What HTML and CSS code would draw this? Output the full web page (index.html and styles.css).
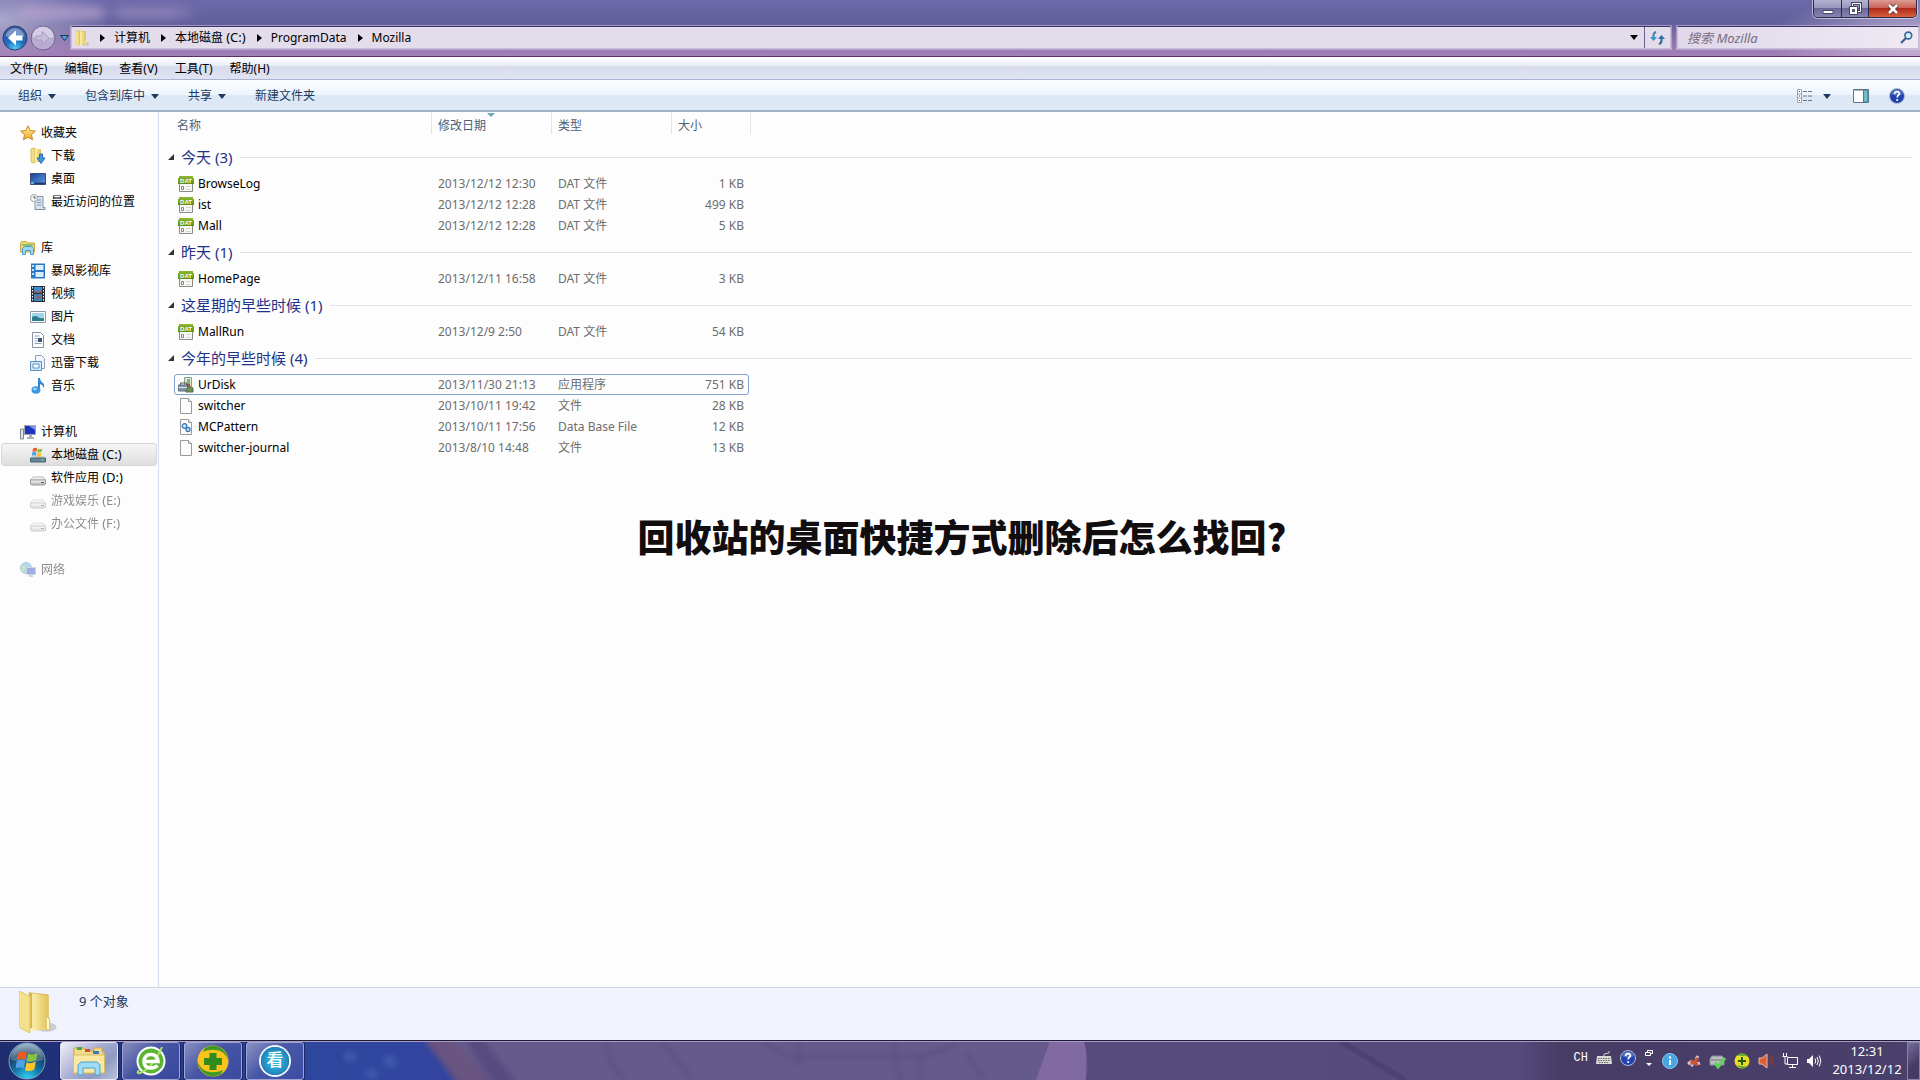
FILE: index.html
```html
<!DOCTYPE html>
<html lang="zh-CN">
<head>
<meta charset="utf-8">
<title>Mozilla</title>
<link rel="stylesheet" href="styles.css">
</head>
<body>
<svg class="defs" aria-hidden="true">
  <defs>
    <linearGradient id="g-folder" x1="0" x2="1"><stop offset="0" stop-color="#fbf0ad"/><stop offset="1" stop-color="#e2c254"/></linearGradient>
    <linearGradient id="g-green" x1="0" x2="0" y1="0" y2="1"><stop offset="0" stop-color="#8fb832"/><stop offset="1" stop-color="#5f8f10"/></linearGradient>
    <linearGradient id="g-star" x1="0" x2="0" y1="0" y2="1"><stop offset="0" stop-color="#fff0a0"/><stop offset="1" stop-color="#f2a626"/></linearGradient>
    <linearGradient id="g-blue" x1="0" x2="1" y1="0" y2="1"><stop offset="0" stop-color="#1c3f96"/><stop offset="1" stop-color="#5b9be6"/></linearGradient>
    <linearGradient id="g-disk" x1="0" x2="0" y1="0" y2="1"><stop offset="0" stop-color="#fafafa"/><stop offset="1" stop-color="#b4b4b4"/></linearGradient>
    <radialGradient id="g-back" cx=".5" cy=".95" r=".9"><stop offset="0" stop-color="#4fd0f8"/><stop offset=".45" stop-color="#1f6cba"/><stop offset="1" stop-color="#3a5a9e"/></radialGradient>
    <radialGradient id="g-orb" cx=".5" cy="1" r="1"><stop offset="0" stop-color="#35d6f6"/><stop offset=".4" stop-color="#1275a6"/><stop offset=".7" stop-color="#1d4268"/><stop offset="1" stop-color="#8fb0c8"/></radialGradient>
    <symbol id="i-dat" viewBox="0 0 16 16">
      <path d="M1.500 6v9.500h13V6" fill="#f7f7f3" stroke="#8a8a88"/>
      <path d="M1 0h14v2h1v6H0V2h1z" fill="url(#g-green)"/>
      <text x="8" y="7" class="dat-label">DAT</text>
      <path d="M3.500 10.500h2v3h-2z" fill="none" stroke="#888"/><path d="M8 10h5v1H8zM8 13h5v1H8z" fill="#d4d8d0"/>
    </symbol>
    <symbol id="i-page" viewBox="0 0 16 16">
      <path d="M2.500.5h8l3 3v12h-11z" fill="#fcfcfc" stroke="#999"/><path d="M10.500.5v3h3" fill="#eee" stroke="#999"/>
    </symbol>
    <symbol id="i-disk" viewBox="0 0 16 16">
      <path d="M3 7h10l2.500 3H.5z" fill="#f2f2f2" stroke="#bbb"/><path d="M.5 10h15v4l-1 1h-13l-1-1z" fill="url(#g-disk)" stroke="#999"/><path d="M11 12h3v1h-3z" fill="#555"/>
    </symbol>
    <symbol id="i-flag" viewBox="0 0 16 16">
      <path d="M1.500 2.500Q4.500 0 7.500 2L6.500 7Q4 5 .5 7z" fill="#ee5b22"/><path d="M8.500 2.500Q11.500 4 15 2l-1 5q-4 2-6.500.5z" fill="#86c440"/><path d="M.5 8Q4 6 6.300 8l-1 5Q3 11-.5 13z" fill="#4da0ea"/><path d="M7.300 8.500Q10 10 13.800 8l-1 5.500q-3.500 2-6.500.500z" fill="#fbc62c"/>
    </symbol>
    <symbol id="i-help" viewBox="0 0 16 16">
      <circle cx="8" cy="8" r="7.500" fill="#2242b0" stroke="#b4bccb"/><path d="M2 6a6.300 6.300 0 0 1 12 0q-6 3-12 0" fill="#7795dd" opacity=".6"/><path d="M5.500 6Q6 3.500 8.200 3.700 10.700 4 10.300 6.200 8.200 7.500 8.200 9.500" fill="none" stroke="#fff" stroke-width="1.700"/><circle cx="8.200" cy="12" r="1.100" fill="#fff"/>
    </symbol>
    <symbol id="i-folder" viewBox="0 0 32 36">
      <ellipse cx="23" cy="31" rx="9" ry="4" fill="#888" opacity=".35"/>
      <path d="M8 1l17 2v29H8z" fill="#d8b64a"/><path d="M11 2l14 2v29l-14 1z" fill="url(#g-folder)"/><path d="M0 0l9 5v31L0 31z" fill="#f3e18c" stroke="#e4cb68"/><path d="M23 22q3 0 3 4v7h-3z" fill="#fff8cc" stroke="#dcc36b"/>
    </symbol>
  </defs>
</svg>

<div class="window">
  <header class="frame">
    <div class="titlebar">
      <span class="title-glow"></span>
      <div class="controls">
        <button class="ctl ctl-min" aria-label="最小化"><svg width="14" height="14" viewBox="0 0 14 14"><path d="M2 8.500h10v3H2z" fill="#fff" stroke="#4b4a66"/></svg></button>
        <button class="ctl ctl-max" aria-label="还原"><svg width="14" height="14" viewBox="0 0 14 14"><path d="M4.500 1.500h8v8h-8z" fill="none" stroke="#44435f" stroke-width="3"/><path d="M4.500 1.500h8v8h-8z" fill="none" stroke="#fff"/><path d="M1.500 4.500h8v8h-8z" fill="#fff" stroke="#44435f"/><path d="M4.500 7.500h2v2h-2z" fill="#77759b" stroke="#44435f"/></svg></button>
        <button class="ctl ctl-close" aria-label="关闭"><svg width="14" height="12" viewBox="0 0 14 12"><path d="M3 2l8 8M11 2l-8 8" stroke="#63302f" stroke-width="4.500"/><path d="M3 2l8 8M11 2l-8 8" stroke="#fff" stroke-width="2.600"/></svg></button>
      </div>
    </div>
    <div class="navrow">
      <button class="icon-btn" aria-label="后退"><svg width="26" height="26" viewBox="0 0 26 26"><circle cx="13" cy="13" r="12" fill="url(#g-back)" stroke="#2f3d6c"/><path d="M3.500 11a9.700 9.700 0 0 1 19 0q-9 4-19 0" fill="#fff" opacity=".35"/><path d="M14 5.500L6 13l8 7.500v-5h6.500v-5H14z" fill="#fff"/></svg></button>
      <button class="icon-btn" aria-label="前进"><svg width="26" height="26" viewBox="0 0 26 26"><circle cx="13" cy="13" r="12" fill="#b9acd0" stroke="#6d6492"/><path d="M2.500 12a10.500 10.500 0 0 1 21 0q-10 3-21 0" fill="#fff" opacity=".4"/><path d="M12 6.500l7 6.500-7 6.500v-4.500H6v-4h6z" fill="#c9bedb" stroke="#a99cc4"/></svg></button>
      <button class="icon-btn recent" aria-label="最近的页面"><svg width="9" height="6" viewBox="0 0 9 6"><path d="M.5.500h8l-4 5z" fill="#4aa0d8" stroke="#22335f"/></svg></button>
      <nav class="address" aria-label="地址">
        <svg width="14" height="16"><use href="#i-folder"/></svg>
        <i class="crumb-sep"></i><a href="#">计算机</a>
        <i class="crumb-sep"></i><a href="#">本地磁盘 <span class="latin">(C:)</span></a>
        <i class="crumb-sep"></i><a href="#">ProgramData</a>
        <i class="crumb-sep"></i><a href="#">Mozilla</a>
        <button class="icon-btn history" aria-label="以前的位置"><i class="caret"></i></button>
        <button class="icon-btn refresh" aria-label="刷新"><svg width="15" height="14" viewBox="0 0 15 14"><path d="M6 1Q3 2 3.500 6" fill="none" stroke="#3a7fb5" stroke-width="2"/><path d="M0 6h7l-3.500 4z" fill="#3a8fc8"/><path d="M9 13q3-1 2.500-5" fill="none" stroke="#2a6798" stroke-width="2"/><path d="M8 8h7l-3.500-4z" fill="#2e6fa6"/></svg></button>
      </nav>
      <div class="search">
        <input type="search" placeholder="搜索 Mozilla" aria-label="搜索">
        <svg width="13" height="13" viewBox="0 0 13 13"><path d="M1 12l5-5" stroke="#3c5c86" stroke-width="2.200"/><circle cx="8.300" cy="4.500" r="3.400" fill="#d8f0fa" stroke="#35679b" stroke-width="1.600"/></svg>
      </div>
    </div>
  </header>

  <nav class="menubar">
    <button>文件(F)</button><button>编辑(E)</button><button>查看(V)</button><button>工具(T)</button><button>帮助(H)</button>
  </nav>

  <div class="toolbar">
    <button>组织<i class="caret"></i></button>
    <button>包含到库中<i class="caret"></i></button>
    <button>共享<i class="caret"></i></button>
    <button>新建文件夹</button>
    <div class="tools">
      <button aria-label="更改视图"><svg width="16" height="14" viewBox="0 0 16 14"><path d="M.5.500h4v13h-4zM.5 5h4M.5 9h4" fill="#fff" stroke="#9aa4b4"/><path d="M2 2h1v1H2zM2 6.500h1v1H2zM2 11h1v1H2z" fill="#2b4a80"/><path d="M6 2.500h4M11 2.500h4M6 7h4M11 7h4M6 11.500h4M11 11.500h4" stroke="#6b7685"/></svg></button>
      <button class="view-caret" aria-label="更多选项"><i class="caret"></i></button>
      <button aria-label="预览窗格"><svg width="16" height="14" viewBox="0 0 16 14"><path d="M.5.500h15v13H.5z" fill="#fff" stroke="#5d7289"/><path d="M1 1.500h9" stroke="#a9b9c8"/><path d="M10.500 1h4.500v12h-4.500z" fill="#71bcc4" stroke="#457f8d"/></svg></button>
      <button class="help" aria-label="获取帮助"><svg width="16" height="16"><use href="#i-help"/></svg></button>
    </div>
  </div>

  <div class="body">
    <aside class="tree">
      <ul>
        <li class="root"><svg width="16" height="16" viewBox="0 0 16 16"><path d="M8 .8l2.200 4.700 5.200.6-3.900 3.500 1.100 5.200L8 12.200l-4.600 2.600 1.100-5.200L.6 6.100l5.200-.6z" fill="url(#g-star)" stroke="#c98a24"/></svg><a href="#">收藏夹</a></li>
        <li><svg width="16" height="16" viewBox="0 0 16 16"><path d="M1 1l4-1v15l-4-1z" fill="#f1dd8c" stroke="#d9bd5c"/><path d="M5 1h6v13H5z" fill="url(#g-folder)"/><path d="M9.500 6h3v4H15l-4 5.500L7 10h2.500z" fill="#3f9be0" stroke="#1f6cb4"/></svg><a href="#">下载</a></li>
        <li><svg width="16" height="16" viewBox="0 0 16 16"><path d="M.5 2.500h15v11H.5z" fill="url(#g-blue)" stroke="#3a4b7a"/><path d="M1 11.500h14V13H1z" fill="#233c70"/><path d="M1 11h3v2H1z" fill="#59b2e6"/></svg><a href="#">桌面</a></li>
        <li><svg width="16" height="16" viewBox="0 0 16 16"><path d="M5 2.500h8v11h2v2H5z" fill="#dbe3ea" stroke="#8592a0"/><path d="M7 6h4M7 8.500h4M7 11h4" stroke="#6f9acb"/><circle cx="4" cy="4" r="3.500" fill="#f2f7fb" stroke="#9aa6b2"/><path d="M4 2v2h2" fill="none" stroke="#555"/></svg><a href="#">最近访问的位置</a></li>
      </ul>
      <ul>
        <li class="root"><svg width="16" height="16" viewBox="0 0 16 16"><path d="M.5 3l1-1.500h5l1 1.500h7v9H.5z" fill="#f0d774" stroke="#c6a846"/><path d="M2 4h11v2H2z" fill="#8dc26d"/><path d="M2.500 14.500v-6l2-2h7l2 2v6h-3v-4h-5v4z" fill="#9ed4f4" stroke="#4f9bc9"/></svg><a href="#">库</a></li>
        <li><svg width="16" height="16" viewBox="0 0 16 16"><path d="M1 .500h14v15H1z" fill="#2f76c4"/><path d="M5.500 2h8v5h-8zM5.500 9h8v5h-8z" fill="#d8eefc"/><path d="M2 2h2v2H2zM2 6h2v2H2zM2 10h2v2H2z" fill="#bfe0fa"/></svg><a href="#">暴风影视库</a></li>
        <li><svg width="16" height="16" viewBox="0 0 16 16"><path d="M1 0h14v16H1z" fill="#2b2f36"/><path d="M4 1h8v6H4z" fill="#3f8fd2"/><path d="M4 8h8v7H4z" fill="#3a86c0"/><path d="M5 4l4 2 3-3v4H4zM5 13l3-4 4 3z" fill="#9b5a60"/><path d="M2.500 1v14M13.500 1v14" stroke="#fff" stroke-dasharray="1.500 1.500"/></svg><a href="#">视频</a></li>
        <li><svg width="16" height="16" viewBox="0 0 16 16"><path d="M.5 2.500h15v11H.5z" fill="#fff" stroke="#8b98a6"/><path d="M2 4h12v8H2z" fill="#9cd4ec"/><path d="M2 8q4-2 6 0t6 1v3H2z" fill="#2d7d8d"/></svg><a href="#">图片</a></li>
        <li><svg width="16" height="16" viewBox="0 0 16 16"><path d="M2.500.500h8l3 3v12h-11z" fill="#fff" stroke="#8591a0"/><path d="M4.500 4h5M4.500 6.500h3M4.500 9h3M4.500 11.500h7" stroke="#8fa1b8"/><path d="M8 6h4v4H8z" fill="#3c5879"/></svg><a href="#">文档</a></li>
        <li><svg width="16" height="16" viewBox="0 0 16 16"><path d="M5.500.500h6l3 3v10h-9z" fill="#f4f8fc" stroke="#8ba0b8"/><path d="M.5 6.500h11v9H.5z" fill="#d4e8f8" stroke="#5f8fbd"/><path d="M3 9h6v4H3z" fill="#fff" stroke="#4b96d2"/></svg><a href="#">迅雷下载</a></li>
        <li><svg width="16" height="16" viewBox="0 0 16 16"><path d="M8 0h2q0 3 3.500 5.500Q15 8 13 10q.5-3-3-4v6H8z" fill="#2f86d0"/><ellipse cx="6" cy="12" rx="4.500" ry="3.700" fill="#3b98de"/><ellipse cx="5" cy="11" rx="2" ry="1.300" fill="#a3d7f7"/></svg><a href="#">音乐</a></li>
      </ul>
      <ul>
        <li class="root"><svg width="16" height="16" viewBox="0 0 16 16"><path d="M.5 5h3v10h-3z" fill="#dfe3e6" stroke="#7d868d"/><path d="M4.500 1.500h11v9h-11z" fill="#1e34bd" stroke="#a0a7b0"/><path d="M9 2h6v4z" fill="#7c94ef"/><path d="M9 11h3v2h2v2H7v-2h2z" fill="#a8afb6"/></svg><a href="#">计算机</a></li>
        <li class="current"><svg width="16" height="16" viewBox="0 0 16 16"><path d="M2 9h12l1.500 2.500H.5z" fill="#c4d4dc"/><path d="M.5 11h15v4H.5z" fill="#648698" stroke="#496575"/><path d="M11 12.500h3v1h-3z" fill="#7de05c"/><svg x="2" y="0" width="11" height="11"><use href="#i-flag"/></svg></svg><a href="#">本地磁盘 <span class="latin">(C:)</span></a></li>
        <li><svg width="16" height="16"><use href="#i-disk"/></svg><a href="#">软件应用 <span class="latin">(D:)</span></a></li>
        <li class="dim"><svg width="16" height="16"><use href="#i-disk"/></svg><a href="#">游戏娱乐 <span class="latin">(E:)</span></a></li>
        <li class="dim"><svg width="16" height="16"><use href="#i-disk"/></svg><a href="#">办公文件 <span class="latin">(F:)</span></a></li>
      </ul>
      <ul>
        <li class="root dim"><svg width="16" height="16" viewBox="0 0 16 16"><circle cx="6" cy="6" r="5.500" fill="#4bb0d8" stroke="#3c87b0"/><path d="M3 3q3 1 2 4T3 10Q0 7 3 3" fill="#8ad07a"/><path d="M6.500 5.500h9v7h-9z" fill="#2c4fc0" stroke="#9aa4c8"/><path d="M9 13h4v2H9z" fill="#9aa4b8"/></svg><a href="#">网络</a></li>
      </ul>
    </aside>

    <main class="files">
      <table>
        <colgroup><col class="c-name"><col class="c-date"><col class="c-type"><col class="c-size"><col></colgroup>
        <thead><tr><th>名称</th><th class="sorted">修改日期</th><th>类型</th><th>大小</th><th></th></tr></thead>
        <tbody>
          <tr class="group"><th colspan="5"><div><i class="open"></i>今天 (3)</div></th></tr>
          <tr><td><svg width="16" height="16"><use href="#i-dat"/></svg>BrowseLog</td><td>2013/12/12 12:30</td><td>DAT 文件</td><td>1 KB</td><td></td></tr>
          <tr><td><svg width="16" height="16"><use href="#i-dat"/></svg>ist</td><td>2013/12/12 12:28</td><td>DAT 文件</td><td>499 KB</td><td></td></tr>
          <tr><td><svg width="16" height="16"><use href="#i-dat"/></svg>Mall</td><td>2013/12/12 12:28</td><td>DAT 文件</td><td>5 KB</td><td></td></tr>
        </tbody>
        <tbody>
          <tr class="group"><th colspan="5"><div><i class="open"></i>昨天 (1)</div></th></tr>
          <tr><td><svg width="16" height="16"><use href="#i-dat"/></svg>HomePage</td><td>2013/12/11 16:58</td><td>DAT 文件</td><td>3 KB</td><td></td></tr>
        </tbody>
        <tbody>
          <tr class="group"><th colspan="5"><div><i class="open"></i>这星期的早些时候 (1)</div></th></tr>
          <tr><td><svg width="16" height="16"><use href="#i-dat"/></svg>MallRun</td><td>2013/12/9 2:50</td><td>DAT 文件</td><td>54 KB</td><td></td></tr>
        </tbody>
        <tbody>
          <tr class="group"><th colspan="5"><div><i class="open"></i>今年的早些时候 (4)</div></th></tr>
          <tr class="focused"><td><svg width="16" height="16" viewBox="0 0 16 16"><path d="M6.500.500h7v9h-7z" fill="#dce8dc" stroke="#8aa08c"/><path d="M9 2h3v5H9z" fill="#7db36d"/><path d="M2.500 8V6h6v2" fill="none" stroke="#555"/><path d="M.5 8h10v6H.5z" fill="#8495a8" stroke="#5d6d7e"/><path d="M.5 10.500h10" stroke="#dbe2e8"/><path d="M9 7h3v4H9z" fill="#d2323f"/><path d="M11 9l4 2v4H8v-2z" fill="#6f9155" stroke="#56704a"/></svg>UrDisk</td><td>2013/11/30 21:13</td><td>应用程序</td><td>751 KB</td><td></td></tr>
          <tr><td><svg width="16" height="16"><use href="#i-page"/></svg>switcher</td><td>2013/10/11 19:42</td><td>文件</td><td>28 KB</td><td></td></tr>
          <tr><td><svg width="16" height="16" viewBox="0 0 16 16"><use href="#i-page"/><circle cx="6.500" cy="7" r="2.300" fill="#cfe6f7" stroke="#3579b5" stroke-width="1.300"/><circle cx="10" cy="10.500" r="2" fill="#cfe6f7" stroke="#3579b5" stroke-width="1.300"/></svg>MCPattern</td><td>2013/10/11 17:56</td><td>Data Base File</td><td>12 KB</td><td></td></tr>
          <tr><td><svg width="16" height="16"><use href="#i-page"/></svg>switcher-journal</td><td>2013/8/10 14:48</td><td>文件</td><td>13 KB</td><td></td></tr>
        </tbody>
      </table>
    </main>
  </div>

  <footer class="details">
    <svg width="38" height="42" viewBox="0 0 32 36"><use href="#i-folder"/></svg>
    <span>9 个对象</span>
  </footer>

  <h1 class="caption">回收站的桌面快捷方式删除后怎么找回?</h1>
</div>

<div class="taskbar">
  <svg class="wall" viewBox="0 0 1920 40" preserveAspectRatio="none" aria-hidden="true">
    <defs>
      <linearGradient id="g-wall"><stop offset="0" stop-color="#1d2c6c"/><stop offset=".06" stop-color="#23378a"/><stop offset=".17" stop-color="#2f479e"/><stop offset=".24" stop-color="#3344a0"/></linearGradient>
      <linearGradient id="g-right"><stop offset="0" stop-color="#574b7b"/><stop offset=".52" stop-color="#564a7c"/><stop offset=".57" stop-color="#463c64"/><stop offset="1" stop-color="#4a406c"/></linearGradient>
      <filter id="f-soft" x="-5%" width="110%" y="-50%" height="200%"><feGaussianBlur stdDeviation="3"/></filter>
    </defs>
    <path d="M0 0h1920v40H0z" fill="url(#g-wall)"/>
    <g filter="url(#f-soft)">
      <path d="M418-10h1600v60H468z" fill="#665a8c"/>
      <path d="M418-10h28l50 60h-34z" fill="#69527f"/>
      <path d="M460-10h18l44 60h-26z" fill="#584b80"/>
      <path d="M606 0q0 24 20 40M662 0l30 40M760 0l30 16h110q38 0 60-16M798 0v26M894 0q0 28 8 40M920 16v24M966 12l18 28" fill="none" stroke="#574b7b" stroke-width="4" opacity=".7"/>
    </g>
    <path d="M1050 0h36v40h-50z" fill="#8169a1"/>
    <path d="M1084 0h836v40H1086q4-20-2-40z" fill="url(#g-right)"/>
    <path d="M1340 0l65 40" stroke="#463c6a" stroke-width="6" opacity=".6"/>
    <g fill="#6c90d4" opacity=".25" filter="url(#f-soft)"><circle cx="350" cy="16" r="6"/><circle cx="390" cy="21" r="7"/><circle cx="372" cy="34" r="6"/></g>
  </svg>
  <button class="start" aria-label="开始"><svg width="38" height="38" viewBox="0 0 38 38"><circle cx="19" cy="19" r="18" fill="url(#g-orb)" stroke="#7ea4c2"/><path d="M3 18a16 16 0 0 1 32 0q-16 4-32 0" fill="#fff" opacity=".22"/><svg x="8" y="8" width="23" height="23"><use href="#i-flag"/></svg></svg></button>
  <button class="task active" aria-label="Windows 资源管理器"><svg width="34" height="32" viewBox="0 0 34 32"><path d="M2 6V3h10l2 3h8V3h8v4h2v21H2z" fill="#f2dc8a" stroke="#cda94a"/><path d="M5 2h5v3H5z" fill="#3faa50"/><path d="M13 4h5v3h-5z" fill="#d2542e"/><path d="M21 6h6v3h-6z" fill="#3977c4"/><path d="M1.500 10h31v18h-31z" fill="#f8e8a6" stroke="#d9bd62"/><path d="M6 30V20l3-3h16l3 3v10h-5v-7H11v7z" fill="#9fdaf6" stroke="#4aa3d0"/></svg></button>
  <button class="task" aria-label="浏览器"><svg width="32" height="32" viewBox="0 0 32 32"><circle cx="16" cy="16" r="13.500" fill="#5cb531" stroke="#fff" stroke-width="2"/><path d="M4 25Q1 29 5 28 13 25 20 15 25 7 27 2" fill="none" stroke="#a9e566" stroke-width="2"/><path d="M8.500 16.500H23Q22.500 9.500 16 9.500T9 16.500Q9 23 16 23q4 0 6.500-2.500" fill="none" stroke="#fff" stroke-width="3.500"/></svg></button>
  <button class="task" aria-label="安全卫士"><svg width="32" height="32" viewBox="0 0 32 32"><circle cx="16" cy="16" r="15.500" fill="#fbc31c"/><path d="M8 3Q20-3 28 7q3 4 3 8-3-9-12-10Q12 4 6 7z" fill="#3c9a24"/><path d="M24 29Q12 35 4 25q-3-4-3-8 3 9 12 10 7 1 13-2z" fill="#3c9a24"/><path d="M12.500 8h7v5H25v7h-5.500v5h-7v-5H7v-7h5.500z" fill="#2f8c1d"/></svg></button>
  <button class="task" aria-label="看图"><span class="kan">看</span></button>

  <div class="tray">
    <span class="ime">CH</span>
    <svg class="up" width="16" height="14" viewBox="0 0 16 14"><path d="M8 5V3l5-1V0" fill="none" stroke="#ccc"/><path d="M1 5h14l1 8H0z" fill="#d9d9d9"/><path d="M2 7.500h12M2 9.500h12M3 11.500h10" stroke="#666" stroke-dasharray="1.500 1"/></svg>
    <svg class="up" width="16" height="16"><use href="#i-help"/></svg>
    <svg class="up" width="10" height="18" viewBox="0 0 10 18"><path d="M3.500 3V1.500h5v3H7M1.500 3.500h5v3h-5z" fill="none" stroke="#fff"/><path d="M2 14h6l-3 3z" fill="#fff"/></svg>
    <svg width="16" height="16" viewBox="0 0 16 16"><circle cx="8" cy="8" r="7.500" fill="#46a5e2" stroke="#8ccaf0"/><path d="M8 7v5" stroke="#fff" stroke-width="2"/><circle cx="8" cy="4.500" r="1.200" fill="#fff"/></svg>
    <svg width="16" height="16" viewBox="0 0 16 16"><path d="M2 11l4-3M10 6l2-3M11 11l3-1M5 13l2-2" stroke="#cfcbd6" stroke-width="3"/><path d="M4 8l4-1 3-3 2 2-2 3 2 3-3 1-2-2-3 1z" fill="#cc5236"/></svg>
    <svg width="16" height="16" viewBox="0 0 16 16"><path d="M2 3h10l2 3v6H0V6z" fill="#b9bdc2" stroke="#8c9196"/><path d="M1 7h13" stroke="#777"/><path d="M5 10l3 4 7-9" fill="none" stroke="#5fd058" stroke-width="3"/></svg>
    <svg width="16" height="16" viewBox="0 0 16 16"><circle cx="8" cy="8" r="7.500" fill="#e8dc2a"/><path d="M2 3Q8-2 15 4q-6-2-13-1M14 13q-6 5-12-1 6 2 12 1" fill="#56ab2e"/><path d="M7 4h2v3h3v2H9v3H7V9H4V7h3z" fill="#205c16"/></svg>
    <svg width="16" height="16" viewBox="0 0 16 16"><path d="M1 5h3l5-4v14l-5-4H1z" fill="#d9603a" stroke="#efb9a0"/><path d="M11.500 4q2 4 0 8M14 3q2 5 0 10" fill="none" stroke="#8a3d3d"/></svg>
    <svg width="16" height="16" viewBox="0 0 16 16"><path d="M5.500 4.500h10v7h-10zM10.500 12v3M7 14.500h7" fill="none" stroke="#fff"/><path d="M1.500 0v3M4.500 0v3M.5 3.500h5M3 4v7h2" fill="none" stroke="#fff"/></svg>
    <svg width="16" height="16" viewBox="0 0 16 16"><path d="M1 6h2l4-4v12l-4-4H1z" fill="#fff"/><path d="M9 5.500q1.500 2.500 0 5M11 4q2.500 4 0 8M13.300 2.500q3 5.500 0 11" fill="none" stroke="#fff"/></svg>
    <div class="clock"><span>12:31</span><span>2013/12/12</span></div>
    <button class="peek" aria-label="显示桌面"></button>
  </div>
</div>
</body>
</html>
```
FILE: styles.css
```css
* { box-sizing: border-box; }
body {
  margin: 0;
  height: 100vh;
  display: flex;
  flex-direction: column;
  overflow: hidden;
  background: #fdfdfd;
  color: #000;
  font: 12px/20px "Noto Sans", "Noto Sans CJK SC", sans-serif;
}
button, input { font: inherit; color: inherit; background: none; border: 0; padding: 0; margin: 0; }
button { display: flex; align-items: center; justify-content: center; white-space: nowrap; }
a { color: inherit; text-decoration: none; white-space: nowrap; }
svg { display: block; flex: none; overflow: visible; }
ul { list-style: none; margin: 0; padding: 0; }
.defs { position: absolute; width: 0; height: 0; }
.latin { font-size: 13px; }
.dat-label { font: 700 6px "Liberation Sans", sans-serif; fill: #fff; text-anchor: middle; }
.caret { border: 4px solid transparent; border-top: 5px solid #1e3a5c; border-bottom: 0; }

.window { position: relative; flex: 1; min-height: 0; display: flex; flex-direction: column; }

/* glass frame */
.frame {
  background:
    radial-gradient(ellipse 110px 40px at 0 20px, rgba(190, 186, 214, .8), transparent),
    radial-gradient(ellipse 150px 50px at 100% 40px, rgba(214, 200, 226, .8), transparent),
    linear-gradient(#6e6aaa, #615e9c 40%, #7a6ba6 60%, #9c7cb4 88%, #a080b6);
  border-bottom: 1px solid #5c2f68;
  height: 57px;
}
.titlebar { height: 24px; display: flex; justify-content: space-between; align-items: flex-start; padding: 0 3px 0 20px; }
.title-glow { width: 180px; height: 12px; margin-top: 7px; background: linear-gradient(90deg, #b9a3cf 0 44%, transparent 50%, #9a8cc0 56% 84%, transparent); filter: blur(5px); opacity: .7; }
.controls { display: flex; height: 18px; border: 1px solid #2e2a4c; border-top: 0; border-radius: 0 0 5px 5px; box-shadow: 0 0 0 1px rgba(255, 255, 255, .5); overflow: hidden; }
.ctl { height: 17px; background: linear-gradient(#b5b2d0, #9794bd 50%, #6b6899 50%, #8885b2); border-right: 1px solid #2e2a4c; }
.ctl-min { width: 28px; }
.ctl-max { width: 27px; }
.ctl-close { width: 47px; border: 0; background: linear-gradient(#dc9c93, #cc6357 45%, #b02a1a 50%, #d8613c); }
.navrow { display: flex; align-items: center; padding: 0 1px 0 2px; height: 27px; }
.icon-btn { flex: none; }
.navrow > .icon-btn + .icon-btn { margin-left: 2px; }
.recent { width: 16px; }
.address, .search { display: flex; align-items: center; height: 23px; background: #e3dcea; border: 1px solid #c8bbd6; border-top-color: #3c3463; box-shadow: 0 0 0 1px rgba(225, 210, 235, .45); }
.address { flex: 1; padding-left: 3px; margin-right: 6px; line-height: 18px; }
.navrow > .icon-btn.recent { margin: 0 -1px 0 0; }
.crumb-sep { border: 4px solid transparent; border-left: 5px solid #000; border-right: 0; margin: 0 9px 0 11px; }
.history { margin-left: auto; width: 20px; height: 21px; }
.history .caret { border-top-color: #000; }
.refresh { width: 26px; height: 21px; border-left: 1px solid #6b6290; }
.search { width: 242px; padding: 0 5px 0 9px; background: linear-gradient(90deg, #e0d8ea, #efe9f3); }
.search input { flex: 1; min-width: 0; outline: 0; font-size: 13px; font-style: italic; appearance: none; }
.search input::placeholder { color: #746d80; opacity: 1; }

.menubar { display: flex; gap: 17px; height: 23px; padding: 2px 0 0 10px; background: linear-gradient(#fff, #eceff8 35%, #d7dbec 45%, #dfe3f2); border-bottom: 1px solid #a9b4d0; }
.toolbar { display: flex; gap: 29px; height: 32px; padding: 2px 15px 0 18px; color: #1e3a5c; background: linear-gradient(#fbfdff, #ecf4fc 50%, #dce7f5 52%, #dde9f7); border-bottom: 2px solid #a0b4c9; }
.toolbar .caret { margin-left: 6px; }
.tools { display: flex; margin-left: auto; }
.tools .view-caret { margin: 0 22px 0 4px; }
.tools .help { margin-left: 20px; }

.body { flex: 1; min-height: 0; display: flex; }
.tree { width: 159px; flex: none; border-right: 1px solid #d3deee; padding: 9px 1px 0 1px; }
.tree ul + ul { margin-top: 23px; }
.tree li { display: flex; align-items: center; gap: 5px; height: 23px; padding-left: 28px; border: 1px solid transparent; border-radius: 3px; }
.tree .root { padding-left: 18px; }
.tree .current { background: linear-gradient(#f5f5f5, #dedede); border-color: #d6d6d6; }
.tree .dim { opacity: .45; }

.files { flex: 1; min-width: 0; padding: 0 8px 0 15px; }
table { width: 100%; table-layout: fixed; border-collapse: collapse; }
.c-name { width: 258px; }
.c-date, .c-type { width: 120px; }
.c-size { width: 79px; }
th, td { padding: 0; text-align: left; font-weight: normal; white-space: nowrap; }
thead th { height: 29px; padding: 0 0 2px 6px; color: #4c607a; position: relative; }
thead th:first-child { padding-left: 3px; }
thead th:not(:last-child)::after { content: ""; position: absolute; right: 0; top: 0; height: 22px; border-right: 1px solid #e0e5ee; }
.sorted::before { content: ""; position: absolute; left: 55px; top: 1px; border: 4px solid transparent; border-top-color: #6aa5c4; border-bottom: 0; }
td { height: 21px; color: #6d6d6d; }
td:nth-child(1) { color: #000; padding-left: 4px; }
td:nth-child(2), td:nth-child(3) { padding-left: 6px; }
td:nth-child(4) { text-align: right; padding-right: 7px; }
td svg { display: inline-block; vertical-align: -4px; margin-right: 4px; }
.group th { height: 32px; }
.group div { display: flex; align-items: center; margin-left: -6px; font-size: 15px; color: #1e3287; }
.group div::after { content: ""; flex: 1; margin-left: 8px; border-top: 1px solid #dfe2e6; }
.open { margin-right: 7px; border: 3px solid #333; border-top-color: transparent; border-left-color: transparent; }
.focused { position: relative; }
.focused td:first-child::after { content: ""; position: absolute; left: 0; top: 0; bottom: 0; width: 573px; border: 1px solid #7da2ce; border-radius: 3px; }

.details { display: flex; height: 53px; gap: 22px; padding: 3px 19px; background: #f0f3fd; border-top: 1px solid #ccd5e2; color: #1e395b; font-size: 13px; }
.caption { position: absolute; left: 0; right: 0; top: 507px; margin: 0; padding-left: 4px; text-align: center; font: 900 37px/58px "Noto Sans CJK SC", sans-serif; color: #120e10; }

.taskbar { position: relative; display: flex; height: 40px; flex: none; padding: 1px 0 0 8px; border-top: 1px solid #1f1a38; overflow: hidden; }
.wall { position: absolute; z-index: -1; inset: 0; width: 100%; height: 100%; }
.taskbar::before { content: ""; position: absolute; inset: 0 0 auto; height: 1px; background: #a79cc2; }
.start { margin-right: 14px; }
.task { width: 58px; height: 38px; margin-right: 4px; border: 1px solid #9da5d4; border-radius: 3px; background: linear-gradient(135deg, rgba(205, 200, 225, .6), rgba(95, 105, 180, .55) 45%, rgba(70, 80, 165, .6)); box-shadow: 0 0 0 1px rgba(16, 20, 70, .6); }
.active { border-color: #e4e6f6; background: linear-gradient(135deg, #f0eef6, #a9add2 45%, #8f9ac4 70%, #b9c3da); }
.kan { width: 28px; height: 28px; border-radius: 50%; background: radial-gradient(#37c8e8, #1565a8); box-shadow: 0 0 0 2px #f1f5fa; color: #fff; font-size: 17px; font-weight: 500; line-height: 26px; }
.tray { display: flex; align-items: center; gap: 8px; margin-left: auto; color: #fff; }
.tray .up { margin-bottom: 6px; }
.ime { font: 12px/16px "Liberation Mono", monospace; margin-bottom: 6px; }
.clock { display: flex; flex-direction: column; align-items: center; width: 72px; height: 38px; line-height: 18px; font-size: 13px; margin: 0 -4px 0 1px; }
.peek { width: 13px; height: 38px; border: 1px solid #8b82aa; background: linear-gradient(135deg, #77709a, #453c66 60%); }
```
